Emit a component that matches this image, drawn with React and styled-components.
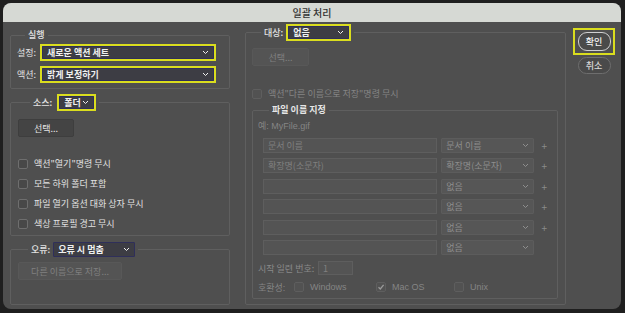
import React from "react";
import styled, { createGlobalStyle } from "styled-components";

const GlobalStyle = createGlobalStyle`
  html, body {
    margin: 0;
    padding: 0;
    background: #1f1f1f;
  }
  * {
    box-sizing: border-box;
  }
`;

const Screen = styled.div`
  width: 625px;
  height: 313px;
  padding: 3px 4px 4px 3px;
  background: #1f1f1f;
  font-family: "Noto Sans CJK KR", "Noto Sans", sans-serif;
  font-size: 9px;
  color: #e2e2e2;
`;

const Window = styled.div`
  height: 100%;
  border-radius: 8px;
  overflow: hidden;
  background: #4f4f4f;
  display: flex;
  flex-direction: column;
`;

const TitleBar = styled.div`
  height: 19px;
  flex: none;
  background: #d6d9d4;
  color: #333;
  font-size: 10px;
  font-weight: 500;
  display: flex;
  align-items: center;
  justify-content: center;
`;

const Body = styled.div`
  flex: 1;
  display: flex;
  padding: 2px 6px 4px 7px;
`;

const LeftColumn = styled.div`
  width: 220px;
  display: flex;
  flex-direction: column;
`;

const Group = styled.fieldset`
  margin: 0;
  margin-top: ${(p) => p.$top || 0}px;
  padding: ${(p) => p.$pad || "0 12px 0 6px"};
  border: 1px solid #5f5f5f;
  border-radius: 2px;
  min-width: 0;
  flex: ${(p) => (p.$grow ? 1 : "none")};
  height: ${(p) => (p.$h ? `${p.$h}px` : "auto")};
  display: flex;
  flex-direction: column;
`;

const Legend = styled.legend`
  padding: 0 3px;
  margin-left: ${(p) => p.$indent || 8}px;
  display: flex;
  align-items: center;
  gap: 3px;
  color: ${(p) => (p.$dim ? "#e6e6e6" : "#e2e2e2")};
  font-weight: ${(p) => (p.$bold ? 700 : 500)};
  line-height: 12px;
`;

const FieldRow = styled.div`
  display: flex;
  align-items: center;
  gap: 3px;
  margin-top: ${(p) => p.$top || 0}px;
  height: 17px;
`;

const Label = styled.span`
  color: ${(p) => (p.$disabled ? "#8a8a8a" : "#e2e2e2")};
  white-space: nowrap;
  width: ${(p) => (p.$w ? `${p.$w}px` : "auto")};
`;

const Highlight = styled.div`
  border: 2px solid ${(p) => (p.$on ? "#dadd1e" : "transparent")};
  width: ${(p) => p.$w}px;
  height: 17px;
  display: flex;
`;

const Select = styled.div`
  flex: ${(p) => (p.$w ? "none" : 1)};
  display: flex;
  align-items: center;
  justify-content: space-between;
  padding: 0 4px 0 4px;
  background: ${(p) => (p.$disabled ? "#565656" : "#3d3d44")};
  border: 1px solid ${(p) => (p.$disabled ? "#5c5c5c" : "#2f2f5a")};
  color: ${(p) => (p.$disabled ? "#8e8e8e" : "#f0f0f0")};
  font-weight: ${(p) => (p.$disabled ? 400 : 600)};
  width: ${(p) => (p.$w ? `${p.$w}px` : "auto")};
  height: ${(p) => (p.$h ? `${p.$h}px` : "auto")};
  margin-left: ${(p) => p.$gap || 0}px;
  border-radius: 1px;
  white-space: nowrap;
`;

const Chevron = () => (
  <svg width="7" height="5" viewBox="0 0 7 5">
    <path d="M1 1 L3.5 3.5 L6 1" fill="none" stroke="currentColor" strokeWidth="1" />
  </svg>
);

const Button = styled.div`
  width: ${(p) => p.$w}px;
  height: 18px;
  margin-top: ${(p) => p.$top || 0}px;
  display: flex;
  align-items: center;
  justify-content: center;
  border-radius: 2px;
  background: ${(p) => (p.$disabled ? "#545454" : "#444444")};
  border: 1px solid ${(p) => (p.$disabled ? "#585858" : "#3e3e3e")};
  color: ${(p) => (p.$disabled ? "#808080" : "#e6e6e6")};
`;

const CheckList = styled.div`
  display: flex;
  flex-direction: column;
  gap: 7px;
  margin-top: 20px;
`;

const CheckRow = styled.div`
  display: flex;
  align-items: center;
  gap: 6px;
  height: 13px;
  margin-top: ${(p) => p.$top || 0}px;
  color: ${(p) => (p.$disabled ? "#858585" : "#e2e2e2")};
`;

const Box = styled.span`
  width: 10px;
  height: 10px;
  flex: none;
  border-radius: 2px;
  border: 1px solid ${(p) => (p.$disabled ? "#5e5e5e" : "#6e6e6e")};
  background: ${(p) => (p.$disabled ? "#525252" : "#484848")};
  display: flex;
  align-items: center;
  justify-content: center;
  color: #9a9a9a;
`;

const MiddlePanel = styled.div`
  width: 321px;
  margin-left: 15px;
  display: flex;
`;

const NameRows = styled.div`
  display: flex;
  flex-direction: column;
  gap: 5.4px;
  margin-top: 6px;
  padding-left: 5px;
`;

const NameRow = styled.div`
  display: flex;
  align-items: center;
  height: 15px;
`;

const TextInput = styled.div`
  width: ${(p) => p.$w}px;
  height: ${(p) => p.$h || 15}px;
  background: #545454;
  border: 1px solid #5e5e5e;
  color: #808080;
  padding: 0 4px;
  display: flex;
  align-items: center;
  white-space: nowrap;
`;

const Plus = styled.span`
  width: 14px;
  margin-left: 3px;
  text-align: center;
  color: #8a8a8a;
  font-size: 10px;
`;

const Example = styled.div`
  color: #858585;
  font-family: "Liberation Sans", "Noto Sans CJK KR", sans-serif;
  margin-top: 3px;
`;

const Compat = styled.div`
  display: flex;
  align-items: center;
  margin-top: 4px;
  height: 13px;
  color: #858585;
  font-family: "Liberation Sans", "Noto Sans CJK KR", sans-serif;
`;

const CompatItem = styled.div`
  display: flex;
  align-items: center;
  gap: 6px;
  width: ${(p) => p.$w}px;
`;

const ActionColumn = styled.div`
  flex: 1;
  display: flex;
  flex-direction: column;
  align-items: center;
  padding-top: 4px;
  padding-left: 7px;
`;

const FocusRing = styled.div`
  width: 42px;
  height: 27px;
  border: 2px solid #dadd1e;
  display: flex;
  align-items: center;
  justify-content: center;
`;

const Pill = styled.div`
  width: 33px;
  height: ${(p) => (p.$primary ? 19 : 17)}px;
  margin-top: ${(p) => p.$top || 0}px;
  border-radius: 9px;
  border: ${(p) => (p.$primary ? "1.5px solid #d0d0d0" : "1px solid #6e6e6e")};
  background: #4a4a4a;
  color: ${(p) => (p.$primary ? "#f2f2f2" : "#d8d8d8")};
  font-weight: 500;
  display: flex;
  align-items: center;
  justify-content: center;
`;

const checks = [
  "액션\"열기\"명령 무시",
  "모든 하위 폴더 포함",
  "파일 열기 옵션 대화 상자 무시",
  "색상 프로필 경고 무시",
];

const nameRows = [
  { text: "문서 이름", pick: "문서 이름", plus: true },
  { text: "확장명(소문자)", pick: "확장명(소문자)", plus: true },
  { text: "", pick: "없음", plus: true },
  { text: "", pick: "없음", plus: true },
  { text: "", pick: "없음", plus: true },
  { text: "", pick: "없음", plus: false },
];

const CheckMark = () => (
  <svg width="8" height="8" viewBox="0 0 8 8">
    <path d="M1.5 4.2 L3.3 6 L6.6 1.8" fill="none" stroke="currentColor" strokeWidth="1.3" />
  </svg>
);

const App = () => {
  return (
    <>
      <GlobalStyle />
      <Screen>
        <Window>
          <TitleBar>일괄 처리</TitleBar>
          <Body>
            <LeftColumn>
              <Group $top={5} $h={60} $pad="3px 12px 0 6px">
                <Legend $indent={8}>실행</Legend>
                <FieldRow>
                  <Label $w={20}>설정:</Label>
                  <Highlight $on $w={176}>
                    <Select>
                      새로운 액션 세트
                      <Chevron />
                    </Select>
                  </Highlight>
                </FieldRow>
                <FieldRow $top={5}>
                  <Label $w={20}>액션:</Label>
                  <Highlight $on $w={176}>
                    <Select>
                      밝게 보정하기
                      <Chevron />
                    </Select>
                  </Highlight>
                </FieldRow>
              </Group>

              <Group $top={5} $h={142} $pad="0 12px 0 7px">
                <Legend $indent={12}>
                  소스:
                  <Highlight $on $w={39} style={{ marginLeft: 2 }}>
                    <Select>
                      폴더
                      <Chevron />
                    </Select>
                  </Highlight>
                </Legend>
                <Button $w={56} $top={8}>선택...</Button>
                <CheckList>
                  {checks.map((c) => (
                    <CheckRow key={c}>
                      <Box />
                      {c}
                    </CheckRow>
                  ))}
                </CheckList>
              </Group>

              <Group $top={6} $grow $pad="0 12px 0 7px">
                <Legend $indent={10}>
                  오류:
                  <Select $w={82} $h={15}>
                    오류 시 멈춤
                    <Chevron />
                  </Select>
                </Legend>
                <Button $w={104} $top={5} $disabled>
                  다른 이름으로 저장...
                </Button>
              </Group>
            </LeftColumn>

            <MiddlePanel>
              <Group $grow $pad="0 7px 5px 6px">
                <Legend $indent={9}>
                  대상:
                  <Highlight $on $w={65}>
                    <Select>
                      없음
                      <Chevron />
                    </Select>
                  </Highlight>
                </Legend>
                <Button $w={57} $top={7} $disabled>
                  선택...
                </Button>
                <CheckRow $top={21} $disabled>
                  <Box $disabled />
                  액션"다른 이름으로 저장"명령 무시
                </CheckRow>
                <Group $top={4} $grow $pad="0 6px 0 5px">
                  <Legend $indent={11} $bold $dim>
                    파일 이름 지정
                  </Legend>
                  <Example>예: MyFile.gif</Example>
                  <NameRows>
                    {nameRows.map((r, i) => (
                      <NameRow key={i}>
                        <TextInput $w={178}>{r.text}</TextInput>
                        <Select $disabled $w={93} $h={15} $gap={4}>
                          {r.pick}
                          <Chevron />
                        </Select>
                        <Plus>{r.plus ? "+" : ""}</Plus>
                      </NameRow>
                    ))}
                  </NameRows>
                  <FieldRow $top={5}>
                    <Label $disabled $w={57}>시작 일련 번호:</Label>
                    <TextInput $w={35} $h={14}>1</TextInput>
                  </FieldRow>
                  <Compat>
                    <CompatItem $w={36}>호환성:</CompatItem>
                    <CompatItem $w={82}>
                      <Box $disabled />
                      Windows
                    </CompatItem>
                    <CompatItem $w={78}>
                      <Box $disabled>
                        <CheckMark />
                      </Box>
                      Mac OS
                    </CompatItem>
                    <CompatItem $w={60}>
                      <Box $disabled />
                      Unix
                    </CompatItem>
                  </Compat>
                </Group>
              </Group>
            </MiddlePanel>

            <ActionColumn>
              <FocusRing>
                <Pill $primary>확인</Pill>
              </FocusRing>
              <Pill $top={2}>취소</Pill>
            </ActionColumn>
          </Body>
        </Window>
      </Screen>
    </>
  );
};

export default App;
